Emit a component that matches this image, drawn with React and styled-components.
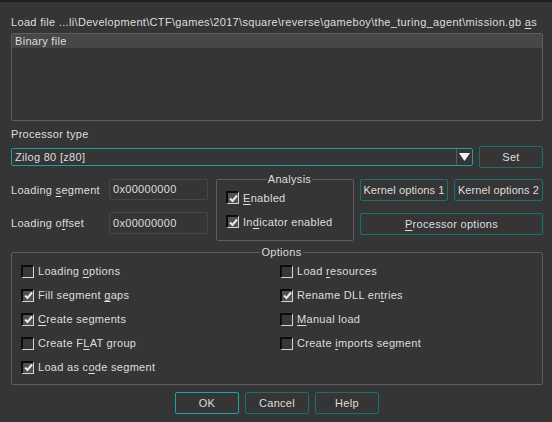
import React from "react";
import styled, { createGlobalStyle } from "styled-components";

const GlobalStyle = createGlobalStyle`
  html, body {
    margin: 0;
    background: #353535;
  }
  body {
    font-family: "Liberation Sans", Arial, sans-serif;
    font-size: 11px;
    letter-spacing: 0.3px;
    color: #dedede;
  }
  u {
    text-underline-offset: 2px;
  }
`;

const Dialog = styled.div`
  width: 552px;
  height: 422px;
  box-sizing: border-box;
  border-top: 2px solid #1f1f1f;
  padding: 0 9px 0 11px;
  display: flex;
  flex-direction: column;
  overflow: hidden;
`;

const Caption = styled.div`
  margin-top: 13px;
  height: 14px;
  line-height: 14px;
  white-space: nowrap;
  letter-spacing: 0.32px;
`;

const List = styled.div`
  margin-top: 4px;
  height: 88px;
  box-sizing: border-box;
  border: 1px solid #5e5e5e;
  border-radius: 2px;
  background: #343434;
`;

const ListItem = styled.div`
  height: 14px;
  line-height: 14px;
  padding-left: 3px;
  background: ${p => (p.selected ? "#474747" : "transparent")};
`;

const Label = styled.div`
  line-height: 14px;
  white-space: nowrap;
`;

const ProcRow = styled.div`
  margin-top: 5px;
  display: flex;
  align-items: center;
  gap: 6px;
`;

const Combo = styled.div`
  flex: 1;
  height: 18px;
  box-sizing: border-box;
  border: 1px solid #1ea0a0;
  border-radius: 2px;
  display: flex;
  align-items: stretch;
`;

const ComboText = styled.div`
  flex: 1;
  padding-left: 3px;
  line-height: 16px;
`;

const ComboArrow = styled.div`
  width: 15px;
  border-left: 1px solid #5a5a5a;
  display: flex;
  align-items: center;
  justify-content: center;
`;

const Button = styled.div`
  width: ${p => p.w}px;
  height: 22px;
  box-sizing: border-box;
  border: 1px solid ${p => (p.primary ? "#1ba4a4" : "#137373")};
  border-radius: 2px;
  display: flex;
  align-items: center;
  justify-content: center;
  overflow: hidden;
  white-space: nowrap;
`;

const Middle = styled.div`
  margin-top: 11px;
  display: flex;
  align-items: flex-start;
`;

const FieldColumn = styled.div`
  display: grid;
  grid-template-columns: 98px 99px;
  row-gap: 12px;
  align-items: center;
`;

const Input = styled.div`
  height: ${p => p.h || 21}px;
  box-sizing: border-box;
  border: 1px solid #474747;
  border-radius: 2px;
  padding-left: 3px;
  line-height: ${p => (p.h || 21) - 2}px;
`;

const Group = styled.fieldset`
  margin: 0;
  box-sizing: border-box;
  border: 1px solid #5e5e5e;
  border-radius: 2px;
  min-width: 0;
`;

const Legend = styled.legend`
  margin: 0 auto;
  padding: 0 1px;
  line-height: 10px;
  height: 10px;
`;

const AnalysisGroup = styled(Group)`
  margin-left: 8px;
  margin-top: -5px;
  width: 138px;
  height: 67px;
  padding: 7px 0 0 9px;
  display: flex;
  flex-direction: column;
  gap: 11px;
`;

const ButtonGrid = styled.div`
  margin-left: 6px;
  display: grid;
  grid-template-columns: 88px 89px;
  column-gap: 6px;
  row-gap: 12px;
`;

const Wide = styled(Button)`
  grid-column: 1 / 3;
  width: auto;
`;

const Tight = styled.span`
  letter-spacing: 0.1px;
`;

const OptionsGroup = styled(Group)`
  margin-top: 6px;
  height: 138px;
  padding: 2px 0 0 9px;
  display: grid;
  grid-template-columns: 259px 1fr;
  grid-auto-rows: 24px;
  grid-auto-flow: column;
  grid-template-rows: repeat(5, 24px);
  align-content: start;
`;

const CheckRow = styled.div`
  display: flex;
  align-items: center;
  gap: 4px;
  white-space: nowrap;
`;

const Box = styled.span`
  width: 13px;
  height: 13px;
  box-sizing: border-box;
  border-style: solid;
  border-width: 2px 1px 1px 2px;
  border-color: #0c0c0c #d4d4d4 #d4d4d4 #0c0c0c;
  background: ${p => (p.checked ? "#505050" : "#383838")};
  display: flex;
  align-items: center;
  justify-content: center;
  flex: none;
`;

const Footer = styled.div`
  margin-top: 7px;
  display: flex;
  justify-content: center;
  gap: 6px;
`;

const Check = ({ checked, children }) => (
  <CheckRow>
    <Box checked={checked}>
      {checked && (
        <svg width="9" height="9" viewBox="0 0 9 9">
          <path d="M1 4.5 L3.5 7 L8 1.5" stroke="#e8e8e8" strokeWidth="2" fill="none" />
        </svg>
      )}
    </Box>
    <span>{children}</span>
  </CheckRow>
);

export default function App() {
  return (
    <>
      <GlobalStyle />
      <Dialog>
        <Caption>
          Load file ...li\Development\CTF\games\2017\square\reverse\gameboy\the_turing_agent\mission.gb <u>a</u>s
        </Caption>
        <List>
          <ListItem selected>Binary file</ListItem>
        </List>

        <Label style={{ marginTop: 6 }}>Processor type</Label>
        <ProcRow>
          <Combo>
            <ComboText>Zilog 80 [z80]</ComboText>
            <ComboArrow>
              <svg width="11" height="8" viewBox="0 0 11 8">
                <path d="M0 0 H11 L5.5 8 Z" fill="#f2f2f2" />
              </svg>
            </ComboArrow>
          </Combo>
          <Button w={64}>Set</Button>
        </ProcRow>

        <Middle>
          <FieldColumn>
            <Label>Loading <u>s</u>egment</Label>
            <Input>0x00000000</Input>
            <Label>Loading o<u>f</u>fset</Label>
            <Input h={22}>0x00000000</Input>
          </FieldColumn>

          <AnalysisGroup>
            <Legend>Analysis</Legend>
            <Check checked><u>E</u>nabled</Check>
            <Check checked>In<u>d</u>icator enabled</Check>
          </AnalysisGroup>

          <ButtonGrid>
            <Button w={88}><Tight>Kernel options 1</Tight></Button>
            <Button w={89}><Tight>Kernel options 2</Tight></Button>
            <Wide><span><u>P</u>rocessor options</span></Wide>
          </ButtonGrid>
        </Middle>

        <OptionsGroup>
          <Legend style={{ gridColumn: "1 / 3" }}>Options</Legend>
          <Check>Loading <u>o</u>ptions</Check>
          <Check checked>Fill segment <u>g</u>aps</Check>
          <Check checked><u>C</u>reate segments</Check>
          <Check>Create F<u>L</u>AT group</Check>
          <Check checked>Load as c<u>o</u>de segment</Check>
          <Check>Load <u>r</u>esources</Check>
          <Check checked>Rename DLL en<u>t</u>ries</Check>
          <Check><u>M</u>anual load</Check>
          <Check>Create <u>i</u>mports segment</Check>
        </OptionsGroup>

        <Footer>
          <Button w={64} primary>OK</Button>
          <Button w={64}>Cancel</Button>
          <Button w={64}>Help</Button>
        </Footer>
      </Dialog>
    </>
  );
}
